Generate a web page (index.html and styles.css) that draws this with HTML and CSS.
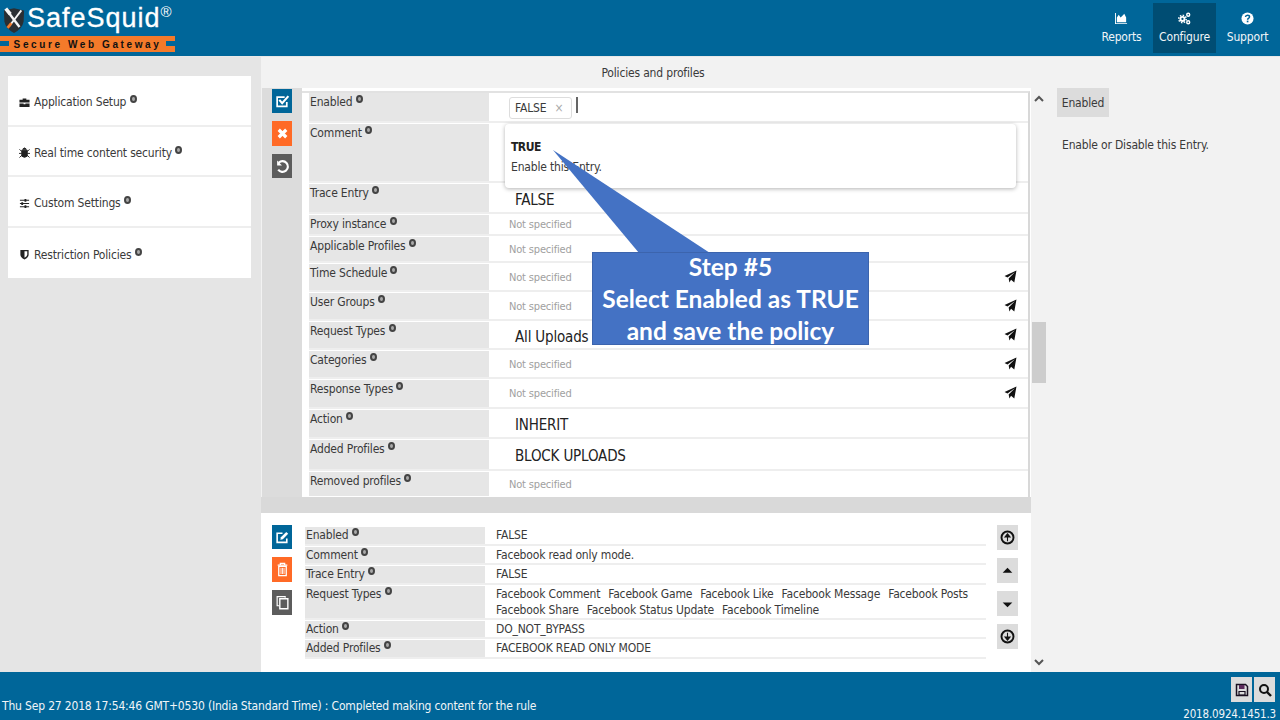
FILE: index.html
```html
<!DOCTYPE html>
<html lang="en">
<head>
    <meta charset="UTF-8">
    <title>SafeSquid - Policies and profiles</title>
    <link rel="stylesheet" href="styles.css">
</head>
<body>

<header class="topbar">
    <div class="logo">
        <svg class="logo-shield" viewBox="0 0 24 28">
            <path d="M1 3 L12 0.5 L23 3 L22.5 15 Q21 23 12 27.5 Q3 23 1.5 15 Z" fill="#2a2f33"/>
            <path d="M5 4 L18 21" stroke="#f5f5f5" stroke-width="2.6"/>
            <path d="M20 3 L7 20" stroke="#f5f5f5" stroke-width="2"/>
            <path d="M3 1 L8 7" stroke="#f5f5f5" stroke-width="4"/>
            <path d="M5 22 L9 17" stroke="#f47a2a" stroke-width="3"/>
        </svg>
        <div class="logo-name">SafeSquid<sup>®</sup></div>
        <div class="logo-tag"><span>Secure Web Gateway</span></div>
    </div>
    <nav class="topnav">
        <a class="nav-item">
            <svg class="nav-icon" viewBox="0 0 14 14"><path d="M1 1 V12 H13 V13 H0 V1 Z M2 11 V6 L4 3 L6 6 L8 4 L10 2 L12 6 V11 Z" fill="#fff"/></svg>
            Reports
        </a>
        <a class="nav-item active">
            <svg class="nav-icon" viewBox="0 0 14 14"><g fill="none" stroke="#fff"><circle cx="4.8" cy="7.5" r="2.2" stroke-width="2"/><circle cx="4.8" cy="7.5" r="4" stroke-width="1.6" stroke-dasharray="1.6 1.5"/><circle cx="11" cy="3" r="1.6" stroke-width="1.5"/><circle cx="11" cy="11" r="1.6" stroke-width="1.5"/></g></svg>
            Configure
        </a>
        <a class="nav-item">
            <svg class="nav-icon" viewBox="0 0 14 14"><circle cx="7" cy="7" r="6.5" fill="#fff"/><path d="M4.8 5.4 Q5 3.4 7 3.4 Q9.2 3.4 9.2 5.2 Q9.2 6.2 8 7 Q7.1 7.5 7.1 8.4" fill="none" stroke="#006699" stroke-width="1.6"/><rect x="6.2" y="9.3" width="1.8" height="1.8" fill="#006699"/></svg>
            Support
        </a>
    </nav>
</header>

<div class="content">
    <aside class="sidebar">
        <div class="side-card">
            <svg class="side-icon" viewBox="0 0 12 12"><path d="M4 3 V1.5 H8 V3 H11.5 V6 H0.5 V3 Z M0.5 7 H5 V8 H7 V7 H11.5 V11 H0.5 Z" fill="#222"/></svg>
            <span>Application Setup <i class="info"></i></span>
        </div>
        <div class="side-card">
            <svg class="side-icon" viewBox="0 0 12 12"><path d="M4 2.5 Q6 -0.5 8 2.5 Z M3 3.5 H9 V10 Q6 12.5 3 10 Z M0.5 2.5 L3 5 M11.5 2.5 L9 5 M0 7 H3 M9 7 H12 M0.5 11.5 L3 9 M11.5 11.5 L9 9" fill="#222" stroke="#222"/></svg>
            <span>Real time content security <i class="info"></i></span>
        </div>
        <div class="side-card">
            <svg class="side-icon" viewBox="0 0 12 12"><path d="M1 2.5 H11 M1 6 H11 M1 9.5 H11" stroke="#222" stroke-width="1.2"/><path d="M7 1 V4 M3.5 4.5 V7.5 M7 8 V11" stroke="#222" stroke-width="2"/></svg>
            <span>Custom Settings <i class="info"></i></span>
        </div>
        <div class="side-card">
            <svg class="side-icon" viewBox="0 0 12 12"><path d="M1.5 1 H10.5 V6 Q10.5 9.5 6 11.5 Q1.5 9.5 1.5 6 Z" fill="#222"/><path d="M6 2.5 H9 V6 Q9 8 6 9.6 Z" fill="#fff"/></svg>
            <span>Restriction Policies <i class="info"></i></span>
        </div>
    </aside>

    <main class="center">
        <div class="page-title">Policies and profiles</div>

        <section class="editor">
            <div class="tool-col">
                <button class="tool blue"><svg viewBox="0 0 14 14"><path d="M11 7.5 V11.5 H2 V3 H9" fill="none" stroke="#fff" stroke-width="1.6"/><path d="M4 5.5 L6.7 8.5 L12.5 2" fill="none" stroke="#fff" stroke-width="2"/></svg></button>
                <button class="tool orange"><svg viewBox="0 0 14 14"><path d="M3.5 3.5 L10.5 10.5 M10.5 3.5 L3.5 10.5" stroke="#fff" stroke-width="3"/></svg></button>
                <button class="tool dark"><svg viewBox="0 0 14 14"><path d="M3.5 3.5 A5 5 0 1 1 3 10" fill="none" stroke="#fff" stroke-width="2"/><path d="M2 1.5 V6 H6.5 Z" fill="#fff"/></svg></button>
            </div>
            <div class="form">
                <div class="form-row h-enabled">
                    <div class="form-label">Enabled <i class="info"></i></div>
                    <div class="form-value">
                        <span class="chip">FALSE <b>×</b></span><span class="caret"></span>
                    </div>
                </div>
                <div class="form-row h-comment"><div class="form-label">Comment <i class="info"></i></div><div class="form-value"></div></div>
                <div class="form-row h-trace"><div class="form-label">Trace Entry <i class="info"></i></div><div class="form-value big">FALSE</div></div>
                <div class="form-row h-proxy"><div class="form-label">Proxy instance <i class="info"></i></div><div class="form-value empty">Not specified</div></div>
                <div class="form-row h-applicable"><div class="form-label">Applicable Profiles <i class="info"></i></div><div class="form-value empty">Not specified</div></div>
                <div class="form-row h-std"><div class="form-label">Time Schedule <i class="info"></i></div><div class="form-value empty">Not specified<svg class="send"><use href="#send"/></svg></div></div>
                <div class="form-row h-std"><div class="form-label">User Groups <i class="info"></i></div><div class="form-value empty">Not specified<svg class="send"><use href="#send"/></svg></div></div>
                <div class="form-row h-std"><div class="form-label">Request Types <i class="info"></i></div><div class="form-value big">All Uploads<svg class="send"><use href="#send"/></svg></div></div>
                <div class="form-row h-std"><div class="form-label">Categories <i class="info"></i></div><div class="form-value empty">Not specified<svg class="send"><use href="#send"/></svg></div></div>
                <div class="form-row h-tall"><div class="form-label">Response Types <i class="info"></i></div><div class="form-value empty">Not specified<svg class="send"><use href="#send"/></svg></div></div>
                <div class="form-row h-tall"><div class="form-label">Action <i class="info"></i></div><div class="form-value big">INHERIT</div></div>
                <div class="form-row h-added"><div class="form-label">Added Profiles <i class="info"></i></div><div class="form-value big">BLOCK UPLOADS</div></div>
                <div class="form-row h-last"><div class="form-label">Removed profiles <i class="info"></i></div><div class="form-value empty">Not specified</div></div>
            </div>
        </section>

        <div class="band"></div>

        <section class="entry">
            <div class="entry-tools">
                <button class="tool blue"><svg viewBox="0 0 14 14"><path d="M11 8 V11.5 H2 V3 H7" fill="none" stroke="#fff" stroke-width="1.5"/><path d="M5.5 6.8 L10.5 1.8 L12.3 3.6 L7.3 8.6 L5 9.2 Z" fill="#fff"/></svg></button>
                <button class="tool orange"><svg viewBox="0 0 14 14"><path d="M5 2.5 V1.2 H9 V2.5 M2.5 3 H11.5" fill="none" stroke="#fff" stroke-width="1.2"/><path d="M3.5 4 H10.5 V12.8 H3.5 Z" fill="none" stroke="#fff" stroke-width="1.2"/><path d="M5.6 5.5 V11.2 M7 5.5 V11.2 M8.4 5.5 V11.2" stroke="#fff" stroke-width="0.8"/></svg></button>
                <button class="tool dark"><svg viewBox="0 0 14 14"><path d="M9.5 2.5 V1.5 H2 V10 H4" fill="none" stroke="#fff" stroke-width="1.1"/><path d="M4.5 3.5 H12 V12.8 H4.5 Z" fill="none" stroke="#fff" stroke-width="1.3"/></svg></button>
            </div>
            <div class="entry-rows">
                <div class="entry-row"><div class="entry-label">Enabled <i class="info"></i></div><div class="entry-value">FALSE</div></div>
                <div class="entry-row"><div class="entry-label">Comment <i class="info"></i></div><div class="entry-value">Facebook read only mode.</div></div>
                <div class="entry-row"><div class="entry-label">Trace Entry <i class="info"></i></div><div class="entry-value">FALSE</div></div>
                <div class="entry-row double"><div class="entry-label">Request Types <i class="info"></i></div>
                    <div class="entry-value tags"><span>Facebook Comment</span><span>Facebook Game</span><span>Facebook Like</span><span>Facebook Message</span><span>Facebook Posts</span><span>Facebook Share</span><span>Facebook Status Update</span><span>Facebook Timeline</span></div>
                </div>
                <div class="entry-row"><div class="entry-label">Action <i class="info"></i></div><div class="entry-value">DO_NOT_BYPASS</div></div>
                <div class="entry-row"><div class="entry-label">Added Profiles <i class="info"></i></div><div class="entry-value">FACEBOOK READ ONLY MODE</div></div>
            </div>
            <div class="move-col">
                <button class="move"><svg viewBox="0 0 14 14"><circle cx="7" cy="7" r="5.6" fill="none" stroke="#111" stroke-width="1.8"/><path d="M7 10.5 V5 M4.6 6.6 L7 3.6 L9.4 6.6 Z" stroke="#111" fill="#111" stroke-width="1"/></svg></button>
                <button class="move"><svg viewBox="0 0 14 14"><path d="M2.5 9 L7 4.5 L11.5 9 Z" fill="#111"/></svg></button>
                <button class="move"><svg viewBox="0 0 14 14"><path d="M2.5 6 L7 10.5 L11.5 6 Z" fill="#111"/></svg></button>
                <button class="move"><svg viewBox="0 0 14 14"><circle cx="7" cy="7" r="5.6" fill="none" stroke="#111" stroke-width="1.8"/><path d="M7 3.5 V9 M4.6 7.4 L7 10.4 L9.4 7.4 Z" stroke="#111" fill="#111" stroke-width="1"/></svg></button>
            </div>
        </section>
    </main>

    <div class="scroller">
        <svg class="arrow" viewBox="0 0 10 8"><path d="M1 6 L5 2 L9 6" fill="none" stroke="#555" stroke-width="2"/></svg>
        <div class="thumb"></div>
        <svg class="arrow bottom" viewBox="0 0 10 8"><path d="M1 2 L5 6 L9 2" fill="none" stroke="#555" stroke-width="2"/></svg>
    </div>

    <aside class="help">
        <span class="help-chip">Enabled</span>
        <p class="help-text">Enable or Disable this Entry.</p>
    </aside>
</div>

<footer class="footer">
    <div class="status">Thu Sep 27 2018 17:54:46 GMT+0530 (India Standard Time) : Completed making content for the rule</div>
    <div class="foot-right">
        <div class="foot-btns">
            <button class="foot-btn"><svg viewBox="0 0 14 14"><path d="M1.5 1.5 H10.5 L12.5 3.5 V12.5 H1.5 Z" fill="none" stroke="#1a1020" stroke-width="1.5"/><path d="M4 2 H9.5 V6 H4 Z" fill="#5a2a5a"/><path d="M4 8.5 H10 V12 H4 Z" fill="none" stroke="#1a1020" stroke-width="1.2"/></svg></button>
            <button class="foot-btn"><svg viewBox="0 0 14 14"><circle cx="6" cy="6" r="4" fill="none" stroke="#111" stroke-width="2"/><path d="M9 9 L13 13" stroke="#111" stroke-width="2.4"/></svg></button>
        </div>
        <div class="version">2018.0924.1451.3</div>
    </div>
</footer>

<!-- dropdown and the tutorial callout lie over the form -->
<div class="dropdown">
    <strong>TRUE</strong>
    <span>Enable this Entry.</span>
</div>
<svg class="callout-tail" width="170" height="110" viewBox="0 0 170 110">
    <path d="M1 0 L87 103 L158 103 Z" fill="#4472c4"/>
</svg>
<div class="callout"><span>Step #5<br>Select Enabled as TRUE<br>and save the policy</span></div>

<svg class="defs">
    <symbol id="send" viewBox="0 0 12 12"><path d="M11.5 0.5 L9.5 11.5 L6.5 9 L5 11.5 L4.3 7.8 L10 2 L3.2 7 L0.5 5.5 Z" fill="#111"/></symbol>
</svg>

</body>
</html>
```

FILE: styles.css
```css
* {
    box-sizing: border-box;
}

html, body {
    margin: 0;
    padding: 0;
    height: 720px;
    overflow: hidden;
}

body {
    font-family: "DejaVu Sans Condensed", "DejaVu Sans", sans-serif;
    font-stretch: condensed;
    font-size: 12px;
    letter-spacing: -0.17px;
    color: #3a3a3a;
    background-color: #f2f2f2;
    display: flex;
    flex-direction: column;
}

button {
    border: none;
    padding: 0;
    display: flex;
    align-items: center;
    justify-content: center;
}

.defs {
    display: none;
}

/* top bar */
.topbar {
    height: 57px;
    flex: none;
    background-color: #006699;
    border-bottom: 1px solid #e8e8e8;
    display: flex;
    justify-content: space-between;
}

.logo {
    width: 180px;
    display: grid;
    grid-template-columns: 27px 1fr;
    grid-template-rows: 36px 16px;
    align-items: start;
}

.logo-shield {
    width: 22px;
    height: 27px;
    margin: 7px 0 0 3px;
}

.logo-name {
    color: #fff;
    font-family: "Liberation Sans", sans-serif;
    font-size: 27px;
    font-stretch: normal;
    letter-spacing: 1px;
    line-height: 36px;
    -webkit-text-stroke: 0.3px #fff;
    white-space: nowrap;
}

.logo-name sup {
    font-size: 15px;
    line-height: 0;
    letter-spacing: 0;
    vertical-align: 10px;
    -webkit-text-stroke: 0;
}

.logo-tag {
    grid-column: 1 / 3;
    height: 16px;
    width: 175px;
    background-color: #f47a2a;
    display: flex;
    align-items: center;
    justify-content: center;
    position: relative;
}

/* blue notches at both ends of the tag line */
.logo-tag::before,
.logo-tag::after {
    content: "";
    position: absolute;
    top: 5px;
    width: 9px;
    height: 5px;
    background-color: #006699;
}

.logo-tag::before {
    left: 0;
}

.logo-tag::after {
    right: 0;
}

.logo-tag span {
    color: #111;
    font-family: "Liberation Sans", sans-serif;
    font-size: 10px;
    font-stretch: normal;
    font-weight: bold;
    letter-spacing: 2.6px;
    white-space: nowrap;
}

.topnav {
    display: flex;
    padding: 3px 1px 0 0;
}

.nav-item {
    width: 63px;
    height: 50px;
    color: #f0f5f8;
    font-size: 12px;
    display: flex;
    flex-direction: column;
    align-items: center;
    justify-content: flex-start;
    padding-top: 9px;
    gap: 5px;
    white-space: nowrap;
}

.nav-item.active {
    background-color: #004d73;
}

.nav-icon {
    width: 13px;
    height: 13px;
}

/* three columns below the bar */
.content {
    flex: 1;
    display: flex;
    min-height: 0;
}

.sidebar {
    width: 261px;
    flex: none;
    background-color: #e5e5e5;
    padding: 19px 10px 0 8px;
    display: flex;
    flex-direction: column;
}

.side-card {
    height: 50.5px;
    background-color: #fff;
    border-bottom: 2px solid #eeeeee;
    display: flex;
    align-items: center;
    padding: 4px 0 0 11px;
    gap: 4px;
}

.side-card:last-child {
    border-bottom: none;
}

.side-icon {
    width: 11px;
    height: 11px;
}

.info {
    display: inline-block;
    width: 7px;
    height: 8px;
    border: 2px solid #444;
    border-radius: 50%;
    background-color: #aaa;
    vertical-align: 3px;
}

.center {
    width: 770px;
    flex: none;
    display: flex;
    flex-direction: column;
    background-color: #fff;
}

.page-title {
    height: 31px;
    flex: none;
    background-color: #f2f2f2;
    text-align: center;
    line-height: 32px;
    padding-left: 14px;
}

/* edit form */
.editor {
    height: 409px;
    flex: none;
    display: flex;
    background-color: #fff;
    border-left: 1px solid #f2f2f2;
}

.tool-col {
    width: 40px;
    flex: none;
    background-color: #dcdcdc;
    padding: 1px 10px 0;
    display: flex;
    flex-direction: column;
    gap: 8px;
}

.tool {
    width: 20px;
    height: 24px;
}

.tool.orange {
    height: 25px;
}

.tool svg {
    width: 15px;
    height: 15px;
}

.blue { background-color: #006699; }
.orange { background-color: #ff6a26; }
.dark { background-color: #5c5c5c; }

.form {
    flex: 1;
    margin: 3px 1px 0 0;
    padding: 0 0 0 7px;
    border-right: 2px solid #d8d8d8;
    border-top: 2px solid #e2e2e2;
}

.form-row {
    display: flex;
    border-bottom: 2px solid #eeeeee;
    margin-bottom: 1px;
}

.h-enabled { height: 30px; }
.h-comment { height: 59px; }
.h-trace { height: 30px; }
.h-proxy { height: 21px; }
.h-applicable { height: 26px; }
.h-std { height: 28px; }
.h-tall { height: 29px; }
.h-added { height: 31px; }
.h-last { height: 24px; border-bottom: none; }

.form-label {
    width: 180px;
    flex: none;
    background-color: #e6e6e6;
    padding: 0 1px;
    line-height: 18px;
    white-space: nowrap;
}

.form-value {
    flex: 1;
    display: flex;
    align-items: center;
    position: relative;
}

.form-value.big {
    padding: 3px 0 0 26px;
    font-size: 15px;
    color: #222;
}

.form-value.empty {
    padding-left: 20px;
    color: #a0a0a0;
    font-size: 11px;
}

.send {
    position: absolute;
    right: 11px;
    top: 6px;
    width: 13px;
    height: 13px;
}

.chip {
    margin: 2px 0 0 20px;
    height: 22px;
    width: 63px;
    border: 1px solid #ddd;
    border-radius: 3px;
    padding-left: 5px;
    line-height: 20px;
    white-space: nowrap;
}

.chip b {
    color: #aaa;
    margin-left: 5px;
    font-weight: normal;
}

.caret {
    width: 2px;
    height: 16px;
    margin: 0 0 4px 4px;
    background-color: #666;
}

.band {
    height: 16px;
    flex: none;
    background-color: #d9d9d9;
}

/* saved entry */
.entry {
    flex: 1;
    display: flex;
    background-color: #fff;
    padding-top: 12px;
}

.entry-tools {
    width: 44px;
    flex: none;
    padding-left: 11px;
    display: flex;
    flex-direction: column;
    gap: 8px;
}

.entry-tools .tool {
    height: 25px;
}

.entry-tools .tool.blue {
    height: 24px;
}

.entry-rows {
    width: 681px;
    flex: none;
    padding-top: 2px;
}

.entry-row {
    display: flex;
    height: 18.6px;
    border-bottom: 2px solid #eeeeee;
    margin-bottom: 1px;
    line-height: 16px;
}

.entry-row.double {
    height: 34px;
}

.entry-label {
    width: 180px;
    flex: none;
    background-color: #e6e6e6;
    padding-left: 1px;
    white-space: nowrap;
}

.entry-value {
    flex: 1;
    padding-left: 11px;
}

.entry-value.tags {
    display: flex;
    flex-wrap: wrap;
    column-gap: 8px;
}

.move-col {
    padding: 0 0 0 11px;
    display: flex;
    flex-direction: column;
    gap: 8px;
}

.move {
    width: 21px;
    height: 25px;
    background-color: #dcdcdc;
}

.move svg {
    width: 15px;
    height: 15px;
}

/* page scrollbar */
.scroller {
    width: 16px;
    flex: none;
    background-color: #f2f2f2;
    position: relative;
}

.arrow {
    position: absolute;
    left: 3px;
    top: 38px;
    width: 10px;
    height: 8px;
}

.arrow.bottom {
    top: auto;
    bottom: 6px;
}

.thumb {
    position: absolute;
    left: 1px;
    top: 265px;
    width: 14px;
    height: 61px;
    background-color: #cdcdcd;
}

.help {
    flex: 1;
    padding: 31px 0 0 10px;
    background-color: #f2f2f2;
}

.help-chip {
    display: inline-block;
    height: 29px;
    width: 52px;
    background-color: #dcdcdc;
    line-height: 31px;
    text-align: center;
}

.help-text {
    margin: 21px 0 0 5px;
}

/* footer */
.footer {
    height: 48px;
    flex: none;
    background-color: #006699;
    color: #f0f5f8;
    display: flex;
    justify-content: space-between;
    align-items: flex-end;
}

.status {
    padding: 0 0 7px 2px;
}

.foot-right {
    align-self: flex-start;
    display: flex;
    flex-direction: column;
    align-items: flex-end;
    padding: 5px 4px 0 0;
}

.foot-btns {
    display: flex;
    gap: 2px;
    padding-right: 1px;
}

.foot-btn {
    width: 21px;
    height: 25px;
    background-color: #dcdcdc;
}

.foot-btn svg {
    width: 14px;
    height: 14px;
}

.version {
    font-size: 11.5px;
    line-height: 14px;
    margin-top: 5px;
}

/* overlays */
.dropdown {
    position: absolute;
    left: 505px;
    top: 124px;
    width: 511px;
    height: 64px;
    background-color: #fff;
    border-radius: 4px;
    box-shadow: 0 1px 4px rgba(0, 0, 0, 0.3);
    padding: 13px 6px;
    display: flex;
    flex-direction: column;
    line-height: 20px;
}

.dropdown strong {
    color: #222;
    letter-spacing: -0.5px;
}

.callout-tail {
    position: absolute;
    left: 552px;
    top: 150px;
}

.callout {
    position: absolute;
    left: 592px;
    top: 252px;
    width: 277px;
    height: 93px;
    background-color: #4472c4;
    border: 1px solid #3c64ad;
    color: #fff;
    font-family: Lato, "Liberation Sans", sans-serif;
    font-size: 24.5px;
    font-stretch: normal;
    font-weight: bold;
    letter-spacing: 0;
    line-height: 32px;
    text-align: center;
    display: flex;
    align-items: center;
    justify-content: center;
    white-space: nowrap;
}
```
